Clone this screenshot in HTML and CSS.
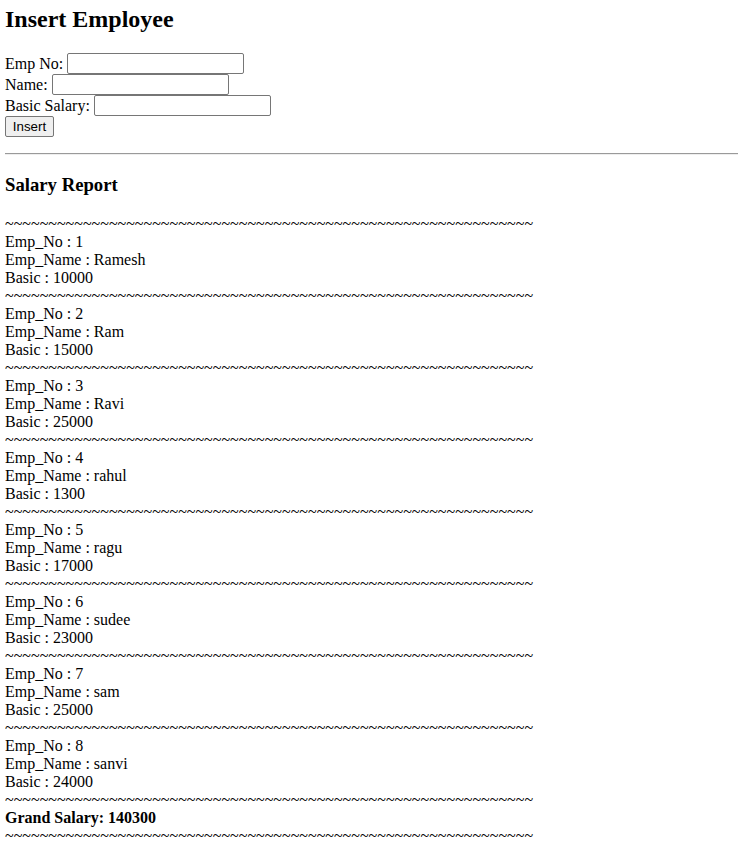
FILE: index.html
```html
<!DOCTYPE html>
<html>
<head>
<meta charset="utf-8">
<title>Insert Employee</title>
<link rel="stylesheet" href="styles.css">
</head>
<body>
<h2 class="title">Insert Employee</h2>
<form class="emp-form">
  <div class="row">Emp No: <input type="text" class="field"></div>
  <div class="row">Name: <input type="text" class="field"></div>
  <div class="row">Basic Salary: <input type="text" class="field"></div>
  <div class="row"><button type="button" class="btn">Insert</button></div>
</form>
<hr class="rule">
<h3 class="subtitle">Salary Report</h3>
<div class="report">
  <div class="sep">~~~~~~~~~~~~~~~~~~~~~~~~~~~~~~~~~~~~~~~~~~~~~~~~~~~~~~~~~~~~~</div>
  <div class="rec"><div>Emp_No : 1</div><div>Emp_Name : Ramesh</div><div>Basic : 10000</div></div>
  <div class="sep">~~~~~~~~~~~~~~~~~~~~~~~~~~~~~~~~~~~~~~~~~~~~~~~~~~~~~~~~~~~~~</div>
  <div class="rec"><div>Emp_No : 2</div><div>Emp_Name : Ram</div><div>Basic : 15000</div></div>
  <div class="sep">~~~~~~~~~~~~~~~~~~~~~~~~~~~~~~~~~~~~~~~~~~~~~~~~~~~~~~~~~~~~~</div>
  <div class="rec"><div>Emp_No : 3</div><div>Emp_Name : Ravi</div><div>Basic : 25000</div></div>
  <div class="sep">~~~~~~~~~~~~~~~~~~~~~~~~~~~~~~~~~~~~~~~~~~~~~~~~~~~~~~~~~~~~~</div>
  <div class="rec"><div>Emp_No : 4</div><div>Emp_Name : rahul</div><div>Basic : 1300</div></div>
  <div class="sep">~~~~~~~~~~~~~~~~~~~~~~~~~~~~~~~~~~~~~~~~~~~~~~~~~~~~~~~~~~~~~</div>
  <div class="rec"><div>Emp_No : 5</div><div>Emp_Name : ragu</div><div>Basic : 17000</div></div>
  <div class="sep">~~~~~~~~~~~~~~~~~~~~~~~~~~~~~~~~~~~~~~~~~~~~~~~~~~~~~~~~~~~~~</div>
  <div class="rec"><div>Emp_No : 6</div><div>Emp_Name : sudee</div><div>Basic : 23000</div></div>
  <div class="sep">~~~~~~~~~~~~~~~~~~~~~~~~~~~~~~~~~~~~~~~~~~~~~~~~~~~~~~~~~~~~~</div>
  <div class="rec"><div>Emp_No : 7</div><div>Emp_Name : sam</div><div>Basic : 25000</div></div>
  <div class="sep">~~~~~~~~~~~~~~~~~~~~~~~~~~~~~~~~~~~~~~~~~~~~~~~~~~~~~~~~~~~~~</div>
  <div class="rec"><div>Emp_No : 8</div><div>Emp_Name : sanvi</div><div>Basic : 24000</div></div>
  <div class="sep">~~~~~~~~~~~~~~~~~~~~~~~~~~~~~~~~~~~~~~~~~~~~~~~~~~~~~~~~~~~~~</div>
  <div class="total">Grand Salary: 140300</div>
  <div class="sep">~~~~~~~~~~~~~~~~~~~~~~~~~~~~~~~~~~~~~~~~~~~~~~~~~~~~~~~~~~~~~</div>
</div>
</body>
</html>
```
FILE: styles.css
```css
html, body {
  background: #fff;
}
body {
  margin: 5px 0 0 5px;
  font-family: "Liberation Serif", "Times New Roman", serif;
  font-size: 16px;
  color: #000;
}
.title {
  font-size: 24px;
  font-weight: bold;
  margin: 0 0 20px;
  line-height: 28px;
}
.emp-form {
  margin: 0 0 16px;
}
.row {
  height: 21px;
  line-height: 21px;
  display: flex;
  align-items: center;
  gap: 4px;
}
.field {
  box-sizing: border-box;
  width: 177px;
  height: 21px;
  margin: 0;
  padding: 1px 2px;
  border: 1px solid #767676;
  border-radius: 2px;
  font-family: "Liberation Sans", Arial, sans-serif;
  font-size: 13.33px;
  background: #fff;
}
.btn {
  box-sizing: border-box;
  width: 49px;
  height: 21px;
  margin: 0;
  padding: 1px 6px;
  border: 1px solid #767676;
  border-radius: 2px;
  background: #efefef;
  font-family: "Liberation Sans", Arial, sans-serif;
  font-size: 13.33px;
  color: #000;
}
.rule {
  margin: 0;
  border: 0;
  border-top: 1px solid #9a9a9a;
  border-bottom: 1px solid #eeeeee;
  height: 0;
}
.subtitle {
  font-size: 18.72px;
  font-weight: bold;
  margin: 19px 0;
  line-height: 22px;
}
.report {
  line-height: 18px;
}
.sep {
  white-space: nowrap;
}
.total {
  font-weight: bold;
}
```
